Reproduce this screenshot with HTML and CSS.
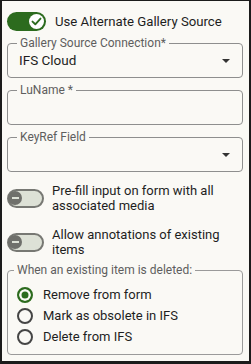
FILE: index.html
```html
<!DOCTYPE html>
<html>
  <head>
    <title>Gallery Source Settings</title>
    <link rel="stylesheet" href="styles.css">
  </head>
  <body>
    <div class="panel">
      <div class="toggle-row main">
        <span class="switch on">
          <span class="thumb">
            <svg width="11" height="11" viewBox="0 0 11 11">
              <path d="M1.5 5.6 L4.3 8.3 L9.5 2.6" fill="none" stroke="#2c6b1e" stroke-width="1.9" stroke-linecap="round" stroke-linejoin="round"/>
            </svg>
          </span>
        </span>
        <span class="toggle-label">Use Alternate Gallery Source</span>
      </div>

      <fieldset class="field">
        <legend>Gallery Source Connection*</legend>
        <div class="select">
          <span class="value">IFS Cloud</span>
          <svg class="arrow" width="8" height="4" viewBox="0 0 8 4">
            <path d="M0 0 H8 L4 4 Z" fill="#333"/>
          </svg>
        </div>
      </fieldset>

      <fieldset class="field">
        <legend>LuName *</legend>
        <div class="select"><span class="value"></span></div>
      </fieldset>

      <fieldset class="field">
        <legend>KeyRef Field</legend>
        <div class="select">
          <span class="value"></span>
          <svg class="arrow" width="8" height="4" viewBox="0 0 8 4">
            <path d="M0 0 H8 L4 4 Z" fill="#333"/>
          </svg>
        </div>
      </fieldset>

      <div class="toggle-row option">
        <span class="switch off"><span class="thumb"></span></span>
        <span class="toggle-label">Pre-fill input on form with all associated media</span>
      </div>

      <div class="toggle-row option">
        <span class="switch off"><span class="thumb"></span></span>
        <span class="toggle-label">Allow annotations of existing items</span>
      </div>

      <fieldset class="group">
        <legend>When an existing item is deleted:</legend>
        <div class="radio-row">
          <span class="radio checked"></span>
          <span>Remove from form</span>
        </div>
        <div class="radio-row">
          <span class="radio"></span>
          <span>Mark as obsolete in IFS</span>
        </div>
        <div class="radio-row">
          <span class="radio"></span>
          <span>Delete from IFS</span>
        </div>
      </fieldset>
    </div>
  </body>
</html>
```

FILE: styles.css
```css
body {
  margin: 0;
  font-family: Roboto, "Liberation Sans", sans-serif;
  color: #1e1e1e;
}

.panel {
  width: 251px;
  height: 364px;
  box-sizing: border-box;
  border-style: solid;
  border-color: #1b1b1b;
  border-width: 1px 2px 3px 2px;
  background: #faf9f5;
  padding: 11px 6px 0 5px;
  overflow: hidden;
}

.toggle-row {
  display: flex;
  align-items: center;
  gap: 8px;
  font-size: 13px;
}

.toggle-row.main {
  height: 19px;
  gap: 9px;
  font-size: 13.2px;
}

.toggle-row.option {
  line-height: 15px;
  margin-top: 11px;
}

.toggle-row.option + .toggle-row.option {
  margin-top: 14px;
}

.switch {
  flex: none;
  display: flex;
  align-items: center;
  box-sizing: border-box;
  height: 19px;
  border-radius: 10px;
}

.switch.on {
  width: 39px;
  background: #2c6b1e;
  justify-content: flex-end;
  padding-right: 2px;
}

.switch.on .thumb {
  width: 15px;
  height: 15px;
  border-radius: 50%;
  background: #fff;
  display: flex;
  align-items: center;
  justify-content: center;
}

.switch.off {
  width: 37px;
  background: #dde1d6;
  border: 2px solid #777873;
}

.switch.off .thumb {
  width: 14px;
  height: 14px;
  margin-left: -1px;
  border-radius: 50%;
  background: #6f706b;
  display: flex;
  align-items: center;
  justify-content: center;
}

.switch.off .thumb::after {
  content: "";
  width: 7px;
  height: 2px;
  background: #dde1d6;
}

.field {
  margin: 5px 0 0;
  padding: 0 12px 0 11px;
  height: 42px;
  box-sizing: border-box;
  border: 1px solid #8e8e8e;
  border-radius: 4px;
}

.field legend,
.group legend {
  font-size: 12px;
  line-height: 14px;
  color: #5e5e5e;
  padding: 0 3px;
}

.field legend {
  margin-left: -2px;
}

.select {
  display: flex;
  align-items: center;
  justify-content: space-between;
  height: 17px;
  padding-top: 2px;
}

.value {
  font-size: 13.5px;
  line-height: 17px;
  color: #1e1e1e;
}

.arrow {
  margin-top: 1px;
}

.group {
  margin: 6px 0 0;
  padding: 7px 8px 0 6px;
  height: 92px;
  box-sizing: border-box;
  border: 1px solid #9a9a9a;
  border-radius: 4px;
}

.group legend {
  margin-left: 0;
}

.radio-row {
  display: flex;
  align-items: center;
  gap: 10px;
  height: 21px;
  font-size: 13px;
}

.radio {
  flex: none;
  width: 16px;
  height: 16px;
  margin-left: 3px;
  box-sizing: border-box;
  border: 2px solid #454545;
  border-radius: 50%;
}

.radio.checked {
  border-color: #2c6b1e;
  background: #2c6b1e;
  box-shadow: inset 0 0 0 2.5px #faf9f5;
}
```
